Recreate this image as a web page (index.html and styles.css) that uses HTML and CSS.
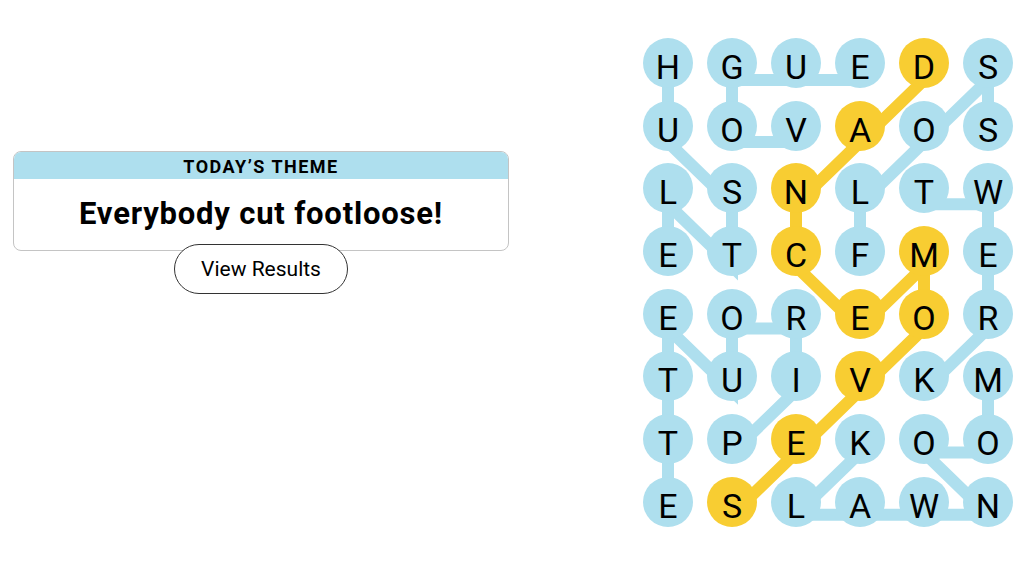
FILE: index.html
```html
<!DOCTYPE html>
<html>

<head>
    <title>Strands</title>
    <link rel="stylesheet" href="styles.css">
</head>

<body>
    <div class="game">
        <div class="theme-panel">
            <div class="theme-card">
                <h2 class="theme-label">TODAY&rsquo;S THEME</h2>
                <p class="theme-text">Everybody cut footloose!</p>
            </div>
            <button class="results-btn">View Results</button>
        </div>

        <div class="board">
            <svg class="paths" width="370" height="500">
                <polyline class="word" points="25,42 25,104.1 89,166.2 89,228.3 25,166.2 25,228.3" />
                <polyline class="word" points="153,104.1 89,104.1 89,42 153,42 217,42" />
                <polyline class="word" points="217,228.3 217,166.2 281,104.1 345,42 345,104.1" />
                <polyline class="word" points="281,166.2 345,166.2 345,228.3 345,290.4 281,352.5" />
                <polyline class="word" points="345,352.5 345,414.6 281,414.6 345,476.7 281,476.7 217,476.7 153,476.7 217,414.6" />
                <polyline class="word" points="89,414.6 153,352.5 153,290.4 89,290.4 89,352.5 25,290.4 25,352.5 25,414.6 25,476.7" />
                <polyline class="word spangram" points="281,42 217,104.1 153,166.2 153,228.3 217,290.4 281,228.3 281,290.4 217,352.5 153,414.6 89,476.7" />
            </svg>
            <div class="grid">
                <span class="cell">H</span><span class="cell">G</span><span class="cell">U</span><span class="cell">E</span><span class="cell gold">D</span><span class="cell">S</span>
                <span class="cell">U</span><span class="cell">O</span><span class="cell">V</span><span class="cell gold">A</span><span class="cell">O</span><span class="cell">S</span>
                <span class="cell">L</span><span class="cell">S</span><span class="cell gold">N</span><span class="cell">L</span><span class="cell">T</span><span class="cell">W</span>
                <span class="cell">E</span><span class="cell">T</span><span class="cell gold">C</span><span class="cell">F</span><span class="cell gold">M</span><span class="cell">E</span>
                <span class="cell">E</span><span class="cell">O</span><span class="cell">R</span><span class="cell gold">E</span><span class="cell gold">O</span><span class="cell">R</span>
                <span class="cell">T</span><span class="cell">U</span><span class="cell">I</span><span class="cell gold">V</span><span class="cell">K</span><span class="cell">M</span>
                <span class="cell">T</span><span class="cell">P</span><span class="cell gold">E</span><span class="cell">K</span><span class="cell">O</span><span class="cell">O</span>
                <span class="cell">E</span><span class="cell gold">S</span><span class="cell">L</span><span class="cell">A</span><span class="cell">W</span><span class="cell">N</span>
            </div>
        </div>
    </div>
</body>

</html>
```

FILE: styles.css
```css
body {
    margin: 0;
    background: #fff;
    color: #000;
    font-family: Roboto, "Liberation Sans", sans-serif;
}

.game {
    display: flex;
    align-items: flex-start;
    padding: 38px 11px 0 13px;
}

.theme-panel {
    width: 496px;
    margin-top: 113px;
    display: flex;
    flex-direction: column;
    align-items: center;
}

.theme-card {
    width: 100%;
    box-sizing: border-box;
    border: 1px solid #c4c4c4;
    border-radius: 8px;
    overflow: hidden;
}

.theme-label {
    margin: 0;
    height: 27px;
    line-height: 29px;
    background: #aedfee;
    text-align: center;
    font-size: 18px;
    font-weight: 700;
    letter-spacing: 1.5px;
}

.theme-text {
    margin: 0;
    height: 71px;
    line-height: 70px;
    text-align: center;
    font-size: 31px;
    font-weight: 700;
    letter-spacing: 0.8px;
}

.results-btn {
    margin-top: -7px;
    width: 174px;
    height: 50px;
    background: #fff;
    border: 1px solid #333;
    border-radius: 25px;
    font-family: Roboto, "Liberation Sans", sans-serif;
    font-size: 21px;
    color: #000;
    cursor: pointer;
}

.board {
    position: relative;
    margin-left: auto;
    width: 370px;
}

.paths {
    position: absolute;
    top: 0;
    left: 0;
}

.word {
    fill: none;
    stroke: #aedfee;
    stroke-width: 12;
}

.word.spangram {
    stroke: #f8cd32;
}

.grid {
    position: relative;
    display: grid;
    grid-template-columns: repeat(6, 50px);
    grid-auto-rows: 50px;
    column-gap: 14px;
    row-gap: 12.7px;
}

.cell {
    display: flex;
    justify-content: center;
    align-items: center;
    box-sizing: border-box;
    padding-top: 8px;
    border-radius: 50%;
    background: #aedfee;
    font-size: 34px;
    line-height: 1;
}

.cell.gold {
    background: #f8cd32;
}
```
